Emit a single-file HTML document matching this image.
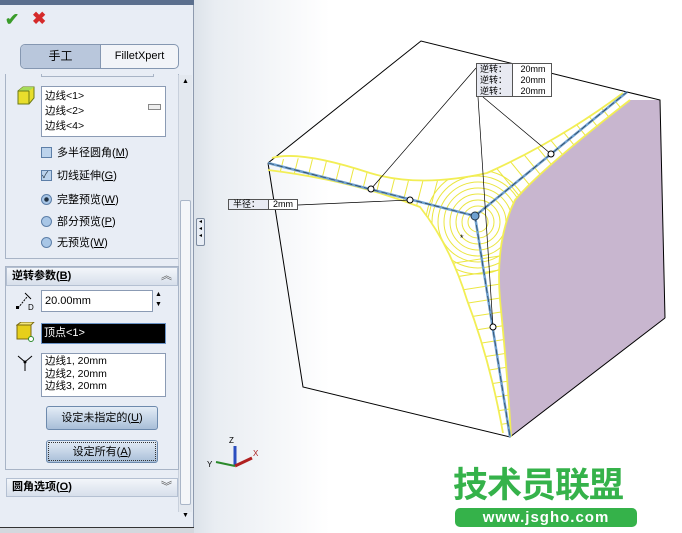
<!DOCTYPE html>
<html><head><meta charset="utf-8"><style>
*{margin:0;padding:0;box-sizing:border-box}
body{width:682px;height:533px;overflow:hidden;position:relative;background:#fff;font-family:"Liberation Sans","Noto Sans CJK SC",sans-serif;font-size:11px;color:#000}
.a{position:absolute}
#panel{left:0;top:0;width:194px;height:533px;background:#e8edf5;border-right:1px solid #8e9aae}
.box{background:#fff;border:1px solid #8b9bb4;font-size:10.5px;line-height:12.5px;padding:1px 3px}
.lbl{font-size:11px;line-height:14px}
.cb{width:11px;height:11px;border:1px solid #5d7fa8;background:#bcd3ec}
.rd{width:11px;height:11px;border-radius:50%;border:1px solid #5d7fa8;background:#a8c6e6}
.hdr{background:linear-gradient(#f3f6fa,#d7dfeb);border:1px solid #b4c0d2;font-weight:bold;font-size:11px;line-height:17px;padding-left:5px}
.btn{border:1px solid #6d8aad;border-radius:3px;background:linear-gradient(#e3ecf6,#a8bed8);text-align:center;font-size:11px;line-height:22px}
</style></head><body>
<div class="a" style="left:0;top:0;width:682px;height:533px;background:linear-gradient(90deg,#dde3ea 195px,#e9edf2 215px,#fff 330px)"></div>
<div id="panel" class="a">
 <div class="a" style="left:0;top:0;width:194px;height:5px;background:#5b6f8e"></div>
 <div class="a" style="left:5px;top:10px;color:#3a9c2a;font-size:17px;font-weight:bold">✔</div>
 <div class="a" style="left:32px;top:9px;color:#d52a2a;font-size:17px;font-weight:bold">✖</div>
 <div class="a" style="left:20px;top:44px;width:159px;height:25px;border:1px solid #8597b1;border-radius:5px;background:#f2f4f8"></div>
 <div class="a" style="left:21px;top:45px;width:79px;height:23px;background:#b9c7dc;border-radius:4px 0 0 4px;text-align:center;line-height:23px;font-size:12px">手工</div>
 <div class="a" style="left:100px;top:45px;width:78px;height:23px;text-align:center;line-height:23px;font-size:11px;border-left:1px solid #8597b1">FilletXpert</div>
 <div class="a" style="left:5px;top:74px;width:174px;height:185px;border:1px solid #a8b4c6;border-top:none"></div>
 <div class="a" style="left:41px;top:74px;width:113px;height:3px;border:1px solid #a8b4c6;border-top:none"></div>
 <div class="a" style="left:178px;top:75px;width:14px;height:437px;background:#e3e8ef;border-left:1px solid #c8d0dc"></div>
 <div class="a" style="left:180px;top:200px;width:11px;height:305px;background:#f4f6f9;border:1px solid #aab6c8;border-radius:2px"></div>
 <div class="a" style="left:182px;top:78px;font-size:7px">▲</div>
 <div class="a" style="left:182px;top:512px;font-size:7px">▼</div>
 <svg class="a" style="left:16px;top:86px" width="20" height="20"><polygon points="2,5 7,1 18,1 18,12 13,18 2,18" fill="#e8de2c" stroke="#6c7a16"/><polygon points="2,5 7,1 18,1 13,5" fill="#a7dc5a"/><line x1="13" y1="5" x2="13" y2="18" stroke="#6c7a16"/><line x1="2" y1="5" x2="13" y2="5" stroke="#6c7a16"/></svg>
 <div class="a box" style="left:41px;top:86px;width:125px;height:51px;line-height:15px;padding-top:2px">边线&lt;1&gt;<br>边线&lt;2&gt;<br>边线&lt;4&gt;</div>
 <div class="a" style="left:148px;top:104px;width:13px;height:6px;border:1px solid #888;background:#eee"></div>
 <div class="a cb" style="left:41px;top:147px"></div><div class="a lbl" style="left:57px;top:146px">多半径圆角(<u>M</u>)</div>
 <div class="a cb" style="left:41px;top:170px;font-size:9px;line-height:9px;color:#234">✓</div><div class="a lbl" style="left:57px;top:169px">切线延伸(<u>G</u>)</div>
 <div class="a rd" style="left:41px;top:194px;background:radial-gradient(#234 30%,#a8c6e6 40%)"></div><div class="a lbl" style="left:57px;top:193px">完整预览(<u>W</u>)</div>
 <div class="a rd" style="left:41px;top:216px"></div><div class="a lbl" style="left:57px;top:215px">部分预览(<u>P</u>)</div>
 <div class="a rd" style="left:41px;top:237px"></div><div class="a lbl" style="left:57px;top:236px">无预览(<u>W</u>)</div>
 <div class="a" style="left:5px;top:266px;width:174px;height:204px;border:1px solid #a8b4c6"></div>
 <div class="a hdr" style="left:6px;top:267px;width:172px">逆转参数(<u>B</u>)<span style="float:right;margin-right:5px;font-weight:normal;color:#555">︽</span></div>
 <svg class="a" style="left:15px;top:292px" width="20" height="20"><line x1="3" y1="16" x2="12" y2="5" stroke="#000" stroke-dasharray="2,1"/><line x1="10" y1="1" x2="16" y2="7" stroke="#000"/><rect x="1" y="14" width="3" height="3"/><text x="13" y="18" font-size="8" font-family="Liberation Sans">D</text></svg>
 <div class="a box" style="left:41px;top:290px;width:112px;height:22px;line-height:18px;font-size:11px">20.00mm</div>
 <div class="a" style="left:155px;top:290px;font-size:7px;line-height:10px">▲<br>▼</div>
 <svg class="a" style="left:16px;top:322px" width="20" height="20"><rect x="1" y="3" width="14" height="14" fill="#e6cf1a" stroke="#7a6a10"/><polygon points="1,3 5,0 18,0 15,3" fill="#f3e77a" stroke="#7a6a10"/><circle cx="15" cy="17" r="2.5" fill="#fff" stroke="#2a8a2a"/></svg>
 <div class="a" style="left:41px;top:323px;width:125px;height:21px;border:1px solid #6b93c6;background:#000;color:#fff;font-size:11px;line-height:19px;padding-left:2px">顶点&lt;1&gt;</div>
 <svg class="a" style="left:16px;top:354px" width="18" height="20"><path d="M2 2 L9 8 L16 2 M9 8 V17" stroke="#000" fill="none"/><circle cx="9" cy="8" r="1.5"/></svg>
 <div class="a box" style="left:41px;top:353px;width:125px;height:44px">边线1, 20mm<br>边线2, 20mm<br>边线3, 20mm</div>
 <div class="a btn" style="left:46px;top:406px;width:112px;height:24px">设定未指定的(<u>U</u>)</div>
 <div class="a btn" style="left:46px;top:440px;width:112px;height:23px;outline:1px dotted #333;outline-offset:-3px">设定所有(<u>A</u>)</div>
 <div class="a hdr" style="left:6px;top:478px;width:172px">圆角选项(<u>O</u>)<span style="float:right;margin-right:5px;font-weight:normal;color:#555">︾</span></div>
 <div class="a" style="left:0;top:527px;width:194px;height:6px;background:#d4d8de;border-top:1px solid #333"></div>
</div>
<div class="a" style="left:196px;top:218px;width:9px;height:28px;background:#e8edf5;border:1px solid #7d8ba0;border-radius:2px;font-size:6px;line-height:7px;text-align:center">◂<br>◂<br>◂</div>
<svg class="a" style="left:0;top:0" width="682" height="533" id="sv">
 <defs><clipPath id="fc"><path d="M268,163 Q300,150 370,173 Q420,188 487,173 Q560,140 623,93 L630,100 Q540,170 515,200 Q495,240 500,300 Q508,380 511,437 L503,433 Q490,360 467,300 Q450,245 420,207 Q350,180 268,170 Z"/></clipPath></defs>
 <polygon points="268,163 421,41 627,92 475,216" fill="#fff"/>
 <path d="M630,100 L660,100 L665,318 L511,437 Q508,380 500,300 Q495,240 515,200 Q540,170 630,100 Z" fill="#c8b6cf"/>
 <path d="M268,163 L421,41 L627,92 M268,163 L303,387 L510,437 L665,318 M627,92 L660,100 L665,318" stroke="#000" fill="none" stroke-width="1"/>
 <g clip-path="url(#fc)" stroke="#ebe640" stroke-width="1" fill="none" id="hatch"></g>
 <g stroke="#f2ee55" stroke-width="1.8" fill="none">
  <path d="M272,158 Q300,150 370,173 Q420,188 487,173 Q560,140 623,93"/>
  <path d="M630,100 Q540,170 515,200 Q495,240 500,300 Q508,380 511,437"/>
  <path d="M503,433 Q490,360 467,300 Q450,245 420,207 Q350,180 268,170"/>
 </g>
 <path d="M268,163 L475,216 L627,92 M475,216 L510,437" stroke="#6fa0cf" stroke-width="2.5" fill="none"/>
 <path d="M268,163 L475,216 L627,92 M475,216 L510,437" stroke="#234" stroke-width="0.6" stroke-dasharray="6,3" fill="none"/>
 <g stroke="#000" stroke-width="0.7" fill="none">
  <path d="M371,189 L476,68 M551,154 L483,97 M493,327 L478,97 M410,200 L298,205"/>
 </g>
 <g fill="#fff" stroke="#000"><circle cx="371" cy="189" r="3"/><circle cx="410" cy="200" r="3"/><circle cx="551" cy="154" r="3"/><circle cx="493" cy="327" r="3"/></g>
 <circle cx="475" cy="216" r="4" fill="#6fa0cf" stroke="#234"/>
 <text x="460" y="241" font-size="9" font-family="Liberation Sans">*</text>
 <g font-family="Liberation Sans">
  <text x="229" y="443" font-size="8">Z</text><text x="253" y="456" font-size="8" fill="#a22">X</text><text x="207" y="467" font-size="8">Y</text>
 </g>
 <path d="M235,446 v20" stroke="#2a4ec0" stroke-width="3"/><path d="M235,466 L252,458" stroke="#b02020" stroke-width="3"/><path d="M235,466 L216,462" stroke="#2a8a2a" stroke-width="2"/>
</svg>
<script>
(function(){var g=document.getElementById('hatch'),s='';
function edge(ax,ay,bx,by,n){var dx=bx-ax,dy=by-ay,L=Math.hypot(dx,dy),px=-dy/L*40,py=dx/L*40;
for(var i=1;i<n;i++){var t=i/n,x=ax+dx*t,y=ay+dy*t;s+='<line x1="'+(x-px)+'" y1="'+(y-py)+'" x2="'+(x+px)+'" y2="'+(y+py)+'"/>';}}
edge(268,163,445,208,13);edge(627,92,500,196,11);edge(510,437,480,245,14);
for(var r=10;r<=52;r+=6)s+='<circle cx="478" cy="222" r="'+r+'"/>';
g.innerHTML=s;})();
</script>
<div class="a" style="left:476px;top:63px;width:76px;height:34px;border:1px solid #555;background:#fff;font-size:9px;line-height:11px">
 <div style="position:absolute;left:0;top:0;width:36px;height:32px;background:#e8eaf2;border-right:1px solid #555;padding-left:3px">逆转：<br>逆转：<br>逆转：</div>
 <div style="position:absolute;left:38px;top:0;width:36px;text-align:center">20mm<br>20mm<br>20mm</div>
</div>
<div class="a" style="left:228px;top:199px;width:70px;height:11px;border:1px solid #555;background:#fff;font-size:9px;line-height:9px">
 <div style="position:absolute;left:0;top:0;width:40px;height:9px;background:#e8eaf2;border-right:1px solid #555;padding-left:4px">半径：</div>
 <div style="position:absolute;left:44px;top:0">2mm</div>
</div>
<div class="a" style="left:453px;top:462px;font-size:35px;font-weight:bold;color:#35b24a;letter-spacing:-1px;line-height:42px;font-family:'Noto Sans CJK SC',sans-serif">技术员联盟</div>
<div class="a" style="left:455px;top:508px;width:182px;height:19px;background:#35b24a;border-radius:5px;color:#fff;font-weight:bold;font-size:15px;line-height:19px;text-align:center;letter-spacing:1px">www.jsgho.com</div>
</body></html>
